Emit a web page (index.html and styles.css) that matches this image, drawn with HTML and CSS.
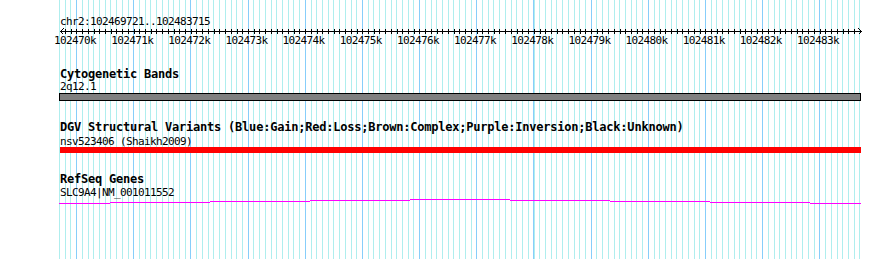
FILE: index.html
```html
<!DOCTYPE html>
<html lang="en">
<head>
    <meta charset="UTF-8">
    <title>chr2:102469721..102483715</title>
    <link rel="stylesheet" href="styles.css">
</head>
<body>
    <div class="view">
        <div class="locus">chr2:102469721..102483715</div>

        <div class="ruler">
            <svg width="803" height="7" viewBox="0 0 803 7" shape-rendering="crispEdges">
                <rect x="1" y="3" width="802" height="1" fill="#000"/>
                <path d="M4.5 0.5 L1.5 3.5 L4.5 6.5" fill="none" stroke="#000"/>
                <path d="M799.5 0.5 L802.5 3.5 L799.5 6.5" fill="none" stroke="#000"/>
            </svg>
        </div>

        <div class="ticks">
            <span>102470k</span>
            <span>102471k</span>
            <span>102472k</span>
            <span>102473k</span>
            <span>102474k</span>
            <span>102475k</span>
            <span>102476k</span>
            <span>102477k</span>
            <span>102478k</span>
            <span>102479k</span>
            <span>102480k</span>
            <span>102481k</span>
            <span>102482k</span>
            <span>102483k</span>
        </div>

        <div class="track track-cyto">
            <div class="track-title">Cytogenetic Bands</div>
            <div class="feature-name">2q12.1</div>
            <div class="band"></div>
        </div>

        <div class="track track-dgv">
            <div class="track-title">DGV Structural Variants (Blue:Gain;Red:Loss;Brown:Complex;Purple:Inversion;Black:Unknown)</div>
            <div class="feature-name">nsv523406 (Shaikh2009)</div>
            <div class="variant"></div>
        </div>

        <div class="track track-genes">
            <div class="track-title">RefSeq Genes</div>
            <div class="feature-name">SLC9A4|NM_001011552</div>
            <!-- intron drawn as a very flat hat -->
            <svg class="gene" width="802" height="5" viewBox="0 0 802 5" shape-rendering="crispEdges">
                <g fill="#ff00ff">
                    <rect x="0" y="4" width="51" height="1"/>
                    <rect x="51" y="3" width="100" height="1"/>
                    <rect x="151" y="2" width="100" height="1"/>
                    <rect x="251" y="1" width="100" height="1"/>
                    <rect x="351" y="0" width="100" height="1"/>
                    <rect x="451" y="1" width="100" height="1"/>
                    <rect x="551" y="2" width="100" height="1"/>
                    <rect x="651" y="3" width="100" height="1"/>
                    <rect x="751" y="4" width="51" height="1"/>
                </g>
            </svg>
        </div>
    </div>
</body>
</html>
```

FILE: styles.css
```css
html, body {
    margin: 0;
    padding: 0;
    background-color: #fff;
}

body {
    font-family: "DejaVu Sans Mono", "Liberation Mono", monospace;
    font-size: 11px;
    letter-spacing: -0.62px;
    color: #000;
    overflow: hidden;
}

.view {
    width: 890px;
    height: 259px;
    box-sizing: border-box;
    padding: 16px 0 0 60px;
    background-image:
        repeating-linear-gradient(to right, #87cefa 0 1px, transparent 1px 57.17px),
        repeating-linear-gradient(to right, #afeeee 0 1px, transparent 1px 5.717px);
    background-position: 76px 0, 59px 0;
    background-size: 785px 100%, 801px 100%;
    background-repeat: no-repeat;
}

.locus {
    line-height: 12px;
    height: 12px;
    white-space: nowrap;
}

.ruler {
    margin-left: -1px;
    height: 7px;
    width: 803px;
    background-image: repeating-linear-gradient(to right, #000 0 1px, transparent 1px 5.717px);
    background-position: 5.717px 1px;
    background-size: 794px 5px;
    background-repeat: no-repeat;
}

.ruler svg {
    display: block;
}

.ticks {
    display: flex;
    margin-left: -13.6px;
    line-height: 11px;
    height: 11px;
}

.ticks span {
    flex: 0 0 57.17px;
    text-align: center;
    white-space: nowrap;
}

.track {
    margin-top: 21px;
}

.track-cyto {
    margin-top: 23px;
}

.track-title {
    font-weight: bold;
    font-size: 12px;
    letter-spacing: -0.22px;
    line-height: 11px;
    height: 11px;
    white-space: nowrap;
}

.feature-name {
    margin-top: 2px;
    line-height: 11px;
    height: 11px;
    white-space: nowrap;
}

.track-cyto .feature-name {
    margin-top: 1px;
}

.track-dgv .feature-name {
    margin-top: 3px;
}

.band {
    margin: 1px 0 0 -1px;
    width: 800px;
    height: 6px;
    background-color: #808080;
    border: 1px solid #000;
}

.variant {
    width: 801px;
    height: 6px;
    background-color: #ff0000;
}

.gene {
    display: block;
    margin: 1px 0 0 -1px;
}
```
